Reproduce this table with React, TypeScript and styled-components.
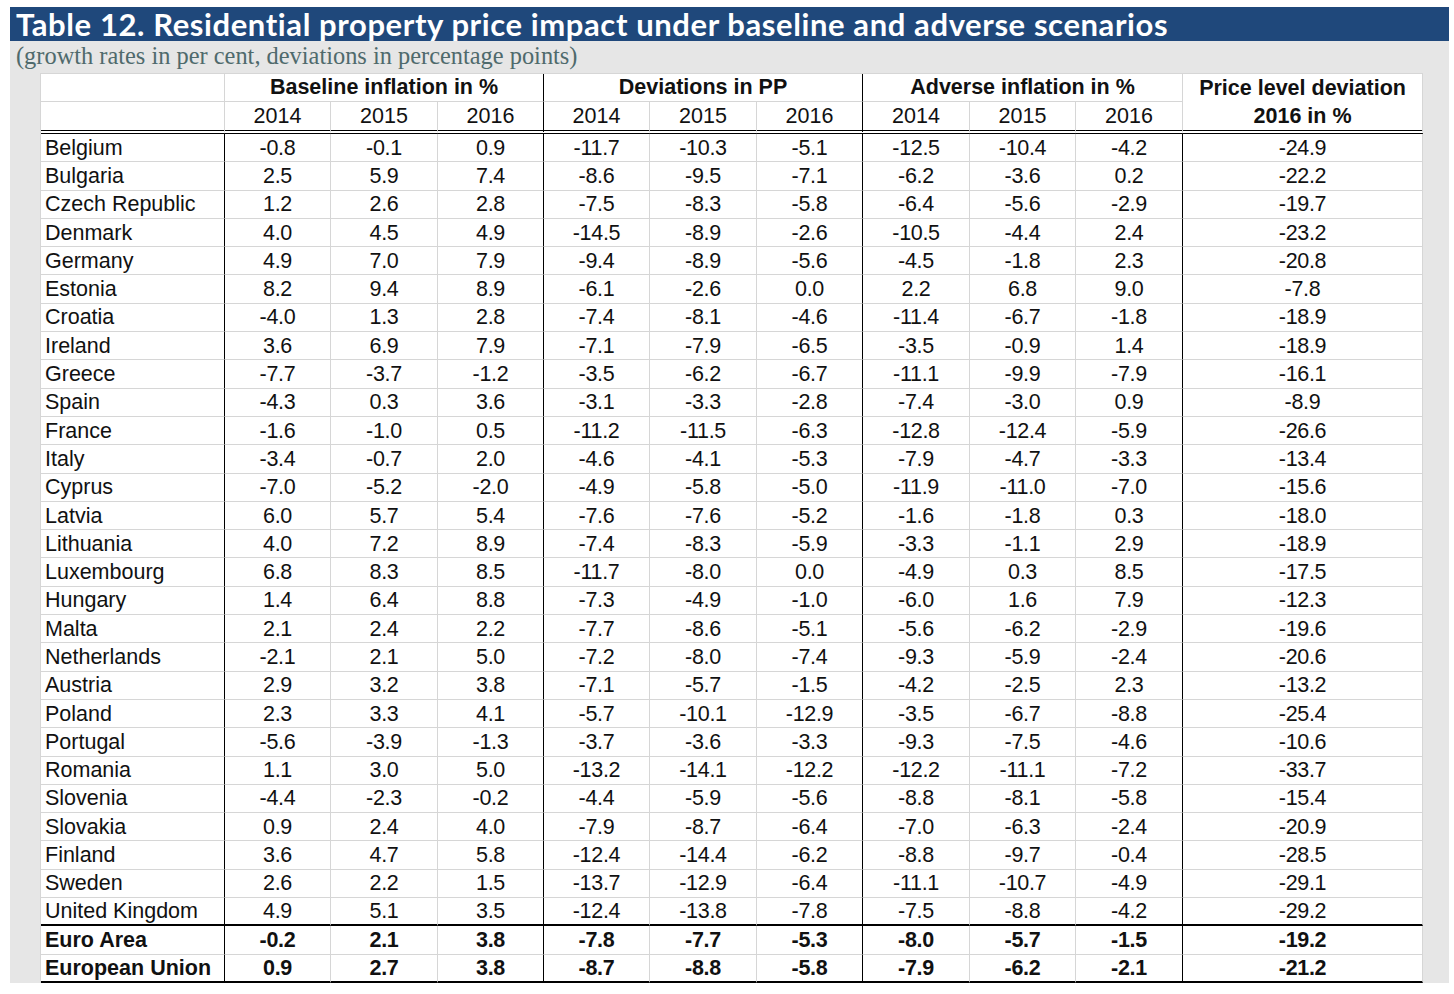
import React from "react";
import styled, { createGlobalStyle } from "styled-components";

const GlobalStyle = createGlobalStyle`
  html, body { margin: 0; padding: 0; background: #ffffff; }
  body { font-family: "Liberation Sans", Arial, sans-serif; }
`;

type Row = { name: string; v: string[]; bold?: boolean; thick?: boolean };

const rows: Row[] = [
  { name: "Belgium", v: ["-0.8", "-0.1", "0.9", "-11.7", "-10.3", "-5.1", "-12.5", "-10.4", "-4.2", "-24.9"] },
  { name: "Bulgaria", v: ["2.5", "5.9", "7.4", "-8.6", "-9.5", "-7.1", "-6.2", "-3.6", "0.2", "-22.2"] },
  { name: "Czech Republic", v: ["1.2", "2.6", "2.8", "-7.5", "-8.3", "-5.8", "-6.4", "-5.6", "-2.9", "-19.7"] },
  { name: "Denmark", v: ["4.0", "4.5", "4.9", "-14.5", "-8.9", "-2.6", "-10.5", "-4.4", "2.4", "-23.2"] },
  { name: "Germany", v: ["4.9", "7.0", "7.9", "-9.4", "-8.9", "-5.6", "-4.5", "-1.8", "2.3", "-20.8"] },
  { name: "Estonia", v: ["8.2", "9.4", "8.9", "-6.1", "-2.6", "0.0", "2.2", "6.8", "9.0", "-7.8"] },
  { name: "Croatia", v: ["-4.0", "1.3", "2.8", "-7.4", "-8.1", "-4.6", "-11.4", "-6.7", "-1.8", "-18.9"] },
  { name: "Ireland", v: ["3.6", "6.9", "7.9", "-7.1", "-7.9", "-6.5", "-3.5", "-0.9", "1.4", "-18.9"] },
  { name: "Greece", v: ["-7.7", "-3.7", "-1.2", "-3.5", "-6.2", "-6.7", "-11.1", "-9.9", "-7.9", "-16.1"] },
  { name: "Spain", v: ["-4.3", "0.3", "3.6", "-3.1", "-3.3", "-2.8", "-7.4", "-3.0", "0.9", "-8.9"] },
  { name: "France", v: ["-1.6", "-1.0", "0.5", "-11.2", "-11.5", "-6.3", "-12.8", "-12.4", "-5.9", "-26.6"] },
  { name: "Italy", v: ["-3.4", "-0.7", "2.0", "-4.6", "-4.1", "-5.3", "-7.9", "-4.7", "-3.3", "-13.4"] },
  { name: "Cyprus", v: ["-7.0", "-5.2", "-2.0", "-4.9", "-5.8", "-5.0", "-11.9", "-11.0", "-7.0", "-15.6"] },
  { name: "Latvia", v: ["6.0", "5.7", "5.4", "-7.6", "-7.6", "-5.2", "-1.6", "-1.8", "0.3", "-18.0"] },
  { name: "Lithuania", v: ["4.0", "7.2", "8.9", "-7.4", "-8.3", "-5.9", "-3.3", "-1.1", "2.9", "-18.9"] },
  { name: "Luxembourg", v: ["6.8", "8.3", "8.5", "-11.7", "-8.0", "0.0", "-4.9", "0.3", "8.5", "-17.5"] },
  { name: "Hungary", v: ["1.4", "6.4", "8.8", "-7.3", "-4.9", "-1.0", "-6.0", "1.6", "7.9", "-12.3"] },
  { name: "Malta", v: ["2.1", "2.4", "2.2", "-7.7", "-8.6", "-5.1", "-5.6", "-6.2", "-2.9", "-19.6"] },
  { name: "Netherlands", v: ["-2.1", "2.1", "5.0", "-7.2", "-8.0", "-7.4", "-9.3", "-5.9", "-2.4", "-20.6"] },
  { name: "Austria", v: ["2.9", "3.2", "3.8", "-7.1", "-5.7", "-1.5", "-4.2", "-2.5", "2.3", "-13.2"] },
  { name: "Poland", v: ["2.3", "3.3", "4.1", "-5.7", "-10.1", "-12.9", "-3.5", "-6.7", "-8.8", "-25.4"] },
  { name: "Portugal", v: ["-5.6", "-3.9", "-1.3", "-3.7", "-3.6", "-3.3", "-9.3", "-7.5", "-4.6", "-10.6"] },
  { name: "Romania", v: ["1.1", "3.0", "5.0", "-13.2", "-14.1", "-12.2", "-12.2", "-11.1", "-7.2", "-33.7"] },
  { name: "Slovenia", v: ["-4.4", "-2.3", "-0.2", "-4.4", "-5.9", "-5.6", "-8.8", "-8.1", "-5.8", "-15.4"] },
  { name: "Slovakia", v: ["0.9", "2.4", "4.0", "-7.9", "-8.7", "-6.4", "-7.0", "-6.3", "-2.4", "-20.9"] },
  { name: "Finland", v: ["3.6", "4.7", "5.8", "-12.4", "-14.4", "-6.2", "-8.8", "-9.7", "-0.4", "-28.5"] },
  { name: "Sweden", v: ["2.6", "2.2", "1.5", "-13.7", "-12.9", "-6.4", "-11.1", "-10.7", "-4.9", "-29.1"] },
  { name: "United Kingdom", v: ["4.9", "5.1", "3.5", "-12.4", "-13.8", "-7.8", "-7.5", "-8.8", "-4.2", "-29.2"], thick: true },
  { name: "Euro Area", v: ["-0.2", "2.1", "3.8", "-7.8", "-7.7", "-5.3", "-8.0", "-5.7", "-1.5", "-19.2"], bold: true },
  { name: "European Union", v: ["0.9", "2.7", "3.8", "-8.7", "-8.8", "-5.8", "-7.9", "-6.2", "-2.1", "-21.2"], bold: true, thick: true },
];

const GRID = "#d6d6d6";
const INK = "#111111";

const Page = styled.div`
  padding: 7px 0 0 10px;
  width: 1439px;
`;

const TitleBar = styled.h1`
  margin: 0;
  height: 34px;
  background: #1f487b;
  color: #ffffff;
  font-family: Lato, "Open Sans", sans-serif;
  font-weight: 700;
  font-size: 31px;
  line-height: 34px;
  padding-left: 6px;
  letter-spacing: 0.6px;
  white-space: nowrap;
`;

const Panel = styled.div`
  background: #e6e6e6;
  padding: 0 27px 0 30px;
`;

const Subtitle = styled.div`
  height: 32px;
  font-family: "Liberation Serif", "Times New Roman", serif;
  font-size: 24.4px;
  line-height: 30px;
  color: #4f6a6c;
  margin-left: -24px;
  white-space: nowrap;
`;

const Table = styled.table`
  border-collapse: separate;
  border-spacing: 0;
  table-layout: fixed;
  width: 1382px;
  background: #ffffff;
  border-top: 1px solid ${GRID};
  border-left: 1px solid ${GRID};
  color: ${INK};
  font-family: "Liberation Sans", Arial, sans-serif;
  font-size: 21.5px;
`;

const HeadRow = styled.tr<{ $h: number }>`
  height: ${(p) => p.$h}px;
`;

const HeadCell = styled.th<{ $right: "grid" | "ink"; $bottom: "grid" | "double" }>`
  padding: 0;
  font-weight: ${(p) => (p.$bottom === "double" ? 400 : 700)};
  text-align: center;
  vertical-align: middle;
  line-height: 27px;
  border-right: 1px solid ${(p) => (p.$right === "ink" ? "#000" : GRID)};
  border-bottom: ${(p) => (p.$bottom === "double" ? "4px double #000" : `1px solid ${GRID}`)};
  white-space: nowrap;
`;

const PriceHead = styled.th`
  padding: 0;
  font-weight: 700;
  text-align: center;
  vertical-align: middle;
  line-height: 28px;
  border-right: 1px solid ${GRID};
  border-bottom: 4px double #000;
`;

const PriceSub = styled.span`
  display: block;
`;

const BodyRow = styled.tr<{ $bold?: boolean }>`
  height: 28.3px;
  font-weight: ${(p) => (p.$bold ? 700 : 400)};
`;

const NameCell = styled.td<{ $thick?: boolean }>`
  padding: 0 0 0 4px;
  text-align: left;
  line-height: 26px;
  white-space: nowrap;
  border-right: 1px solid #000;
  border-bottom: ${(p) => (p.$thick ? "2px solid #000" : `1px solid ${GRID}`)};
`;

const NumCell = styled.td<{ $ink?: boolean; $thick?: boolean }>`
  padding: 0;
  text-align: center;
  line-height: 26px;
  letter-spacing: -0.3px;
  white-space: nowrap;
  border-right: 1px solid ${(p) => (p.$ink ? "#000" : GRID)};
  border-bottom: ${(p) => (p.$thick ? "2px solid #000" : `1px solid ${GRID}`)};
`;

const Tail = styled.div`
  height: 11px;
  background: #ffffff;
`;

const widths = [184, 106, 107, 106, 106, 107, 106, 107, 106, 107, 240];
const groupEnd = new Set([2, 5, 8]);
const years = ["2014", "2015", "2016"];

export default function App() {
  return (
    <>
      <GlobalStyle />
      <Page>
        <TitleBar>Table 12. Residential property price impact under baseline and adverse scenarios</TitleBar>
        <Panel>
          <Subtitle>(growth rates in per cent, deviations in percentage points)</Subtitle>
          <Table>
            <colgroup>
              {widths.map((w, i) => (
                <col key={i} style={{ width: w }} />
              ))}
            </colgroup>
            <thead>
              <HeadRow $h={28}>
                <HeadCell $right="grid" $bottom="grid" />
                <HeadCell colSpan={3} $right="ink" $bottom="grid">Baseline inflation in %</HeadCell>
                <HeadCell colSpan={3} $right="ink" $bottom="grid">Deviations in PP</HeadCell>
                <HeadCell colSpan={3} $right="grid" $bottom="grid">Adverse inflation in %</HeadCell>
                <PriceHead rowSpan={2}>
                  <PriceSub>Price level deviation</PriceSub>
                  <PriceSub>2016 in %</PriceSub>
                </PriceHead>
              </HeadRow>
              <HeadRow $h={31}>
                <HeadCell $right="grid" $bottom="double" />
                {[0, 1, 2].map((g) =>
                  years.map((y, i) => (
                    <HeadCell
                      key={`${g}-${y}`}
                      $right={i === 2 && g < 2 ? "ink" : "grid"}
                      $bottom="double"
                    >
                      {y}
                    </HeadCell>
                  ))
                )}
              </HeadRow>
            </thead>
            <tbody>
              {rows.map((r) => (
                <BodyRow key={r.name} $bold={r.bold}>
                  <NameCell $thick={r.thick}>{r.name}</NameCell>
                  {r.v.map((val, i) => (
                    <NumCell key={i} $ink={groupEnd.has(i)} $thick={r.thick}>
                      {val}
                    </NumCell>
                  ))}
                </BodyRow>
              ))}
            </tbody>
          </Table>
        </Panel>
        <Tail />
      </Page>
    </>
  );
}
